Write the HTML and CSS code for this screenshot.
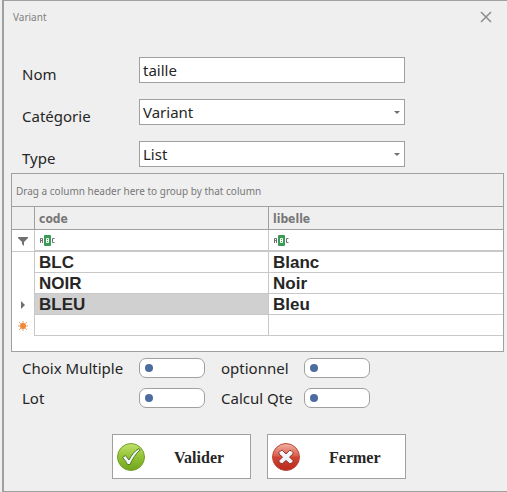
FILE: index.html
```html
<!DOCTYPE html>
<html lang="fr">
<head>
<meta charset="utf-8">
<title>Variant</title>
<link rel="stylesheet" href="styles.css">
</head>
<body>
<main class="window">
  <header class="titlebar">
    <h1 class="title">Variant</h1>
    <button class="close" type="button" aria-label="Close">
      <svg width="12" height="12" viewBox="0 0 12 12"><path d="M1 1l10 10M11 1L1 11" stroke="#8b8b8b" stroke-width="1.5" fill="none"/></svg>
    </button>
  </header>

  <form class="fields">
    <label class="label" for="nom">Nom</label>
    <input class="box" id="nom" type="text" value="taille">
    <label class="label" for="categorie">Catégorie</label>
    <div class="combo">
      <select class="box" id="categorie"><option>Variant</option></select>
      <svg class="arrow" width="6" height="3" viewBox="0 0 6 3"><path d="M0 0h6L3 3z" fill="#707070"/></svg>
    </div>
    <label class="label" for="type">Type</label>
    <div class="combo">
      <select class="box" id="type"><option>List</option></select>
      <svg class="arrow" width="6" height="3" viewBox="0 0 6 3"><path d="M0 0h6L3 3z" fill="#707070"/></svg>
    </div>
  </form>

  <section class="grid">
    <div class="group-panel">Drag a column header here to group by that column</div>
    <table class="table">
      <thead>
        <tr><th class="mark"></th><th class="code">code</th><th>libelle</th></tr>
      </thead>
      <tbody>
        <tr class="filter">
          <td class="mark"><svg width="10" height="10" viewBox="0 0 10 10"><path d="M0 1h10v1L6 6v4L4 8V6L0 2z" fill="#707070"/></svg></td>
          <td><svg class="abc" width="16" height="11" viewBox="0 0 16 11"><rect x="5" width="7" height="11" rx="1" fill="#3a9b57"/><g fill="none" stroke="#707070"><path d="M1.500 8V3.500H3.500V8M1.500 5.500H3.500"/><path d="M15.500 3.500H13.500V7.500H15.500"/></g><path d="M7.500 3.500H9.500V7.500H7.500zM7.500 5.500H9.500" fill="none" stroke="#fff"/></svg></td>
          <td><svg class="abc" width="16" height="11" viewBox="0 0 16 11"><rect x="5" width="7" height="11" rx="1" fill="#3a9b57"/><g fill="none" stroke="#707070"><path d="M1.500 8V3.500H3.500V8M1.500 5.500H3.500"/><path d="M15.500 3.500H13.500V7.500H15.500"/></g><path d="M7.500 3.500H9.500V7.500H7.500zM7.500 5.500H9.500" fill="none" stroke="#fff"/></svg></td>
        </tr>
        <tr><td class="mark"></td><td>BLC</td><td>Blanc</td></tr>
        <tr><td class="mark"></td><td>NOIR</td><td>Noir</td></tr>
        <tr>
          <td class="mark"><svg width="4" height="8" viewBox="0 0 4 8"><path d="M0 0l4 4-4 4z" fill="#707070"/></svg></td>
          <td class="selected">BLEU</td><td>Bleu</td>
        </tr>
        <tr>
          <td class="mark"><svg width="10" height="10" viewBox="0 0 10 10"><path d="M5 0v10M0 5h10M1 1l8 8M9 1L1 9" stroke="#f0a86c"/><circle cx="5" cy="5" r="3" fill="#f0883a"/></svg></td>
          <td></td><td></td>
        </tr>
      </tbody>
    </table>
  </section>

  <section class="options">
    <label for="multiple">Choix Multiple</label><input class="switch" id="multiple" type="checkbox">
    <label for="optionnel">optionnel</label><input class="switch" id="optionnel" type="checkbox">
    <label for="lot">Lot</label><input class="switch" id="lot" type="checkbox">
    <label for="calcul">Calcul Qte</label><input class="switch" id="calcul" type="checkbox">
  </section>

  <footer class="actions">
    <button class="action" type="button">
      <svg width="30" height="30" viewBox="0 0 30 30">
        <defs><linearGradient id="green" x2="0" y2="1"><stop offset="0" stop-color="#c2e16e"/><stop offset=".5" stop-color="#93c136"/><stop offset="1" stop-color="#6fa51c"/></linearGradient></defs>
        <circle cx="15" cy="15" r="13.500" fill="url(#green)" stroke="#74a22c"/>
        <path d="M6.500 15.500l3-2 3.500 4.500C15.500 13 18.500 9 23 6.500l1 1.500c-4.500 4-7.500 9-10 14.500h-2.500C10 19.500 8.500 17.500 6.500 15.500z" fill="#f1f5fa" stroke="#4f7d20"/>
      </svg>
      <span>Valider</span>
    </button>
    <button class="action" type="button">
      <svg width="30" height="30" viewBox="0 0 30 30">
        <defs><linearGradient id="red" x2="0" y2="1"><stop offset="0" stop-color="#f0b3a5"/><stop offset=".45" stop-color="#d9614d"/><stop offset=".5" stop-color="#cf4734"/><stop offset="1" stop-color="#b9281c"/></linearGradient></defs>
        <circle cx="15" cy="15" r="13.500" fill="url(#red)" stroke="#bd4a3c"/>
        <path d="M11.500 8.500L15 12l3.500-3.500h1.500l2 2V12l-3.500 3 3.500 3.500V20l-2 1.500h-1.500L15 18.500l-3.500 3H10L8 20v-1.500l3.500-3.500L8 12v-1.500l2-2z" fill="#f1f5fb" stroke="#963227"/>
      </svg>
      <span>Fermer</span>
    </button>
  </footer>
</main>
</body>
</html>
```

FILE: styles.css
```css
* {
  box-sizing: border-box;
}

body {
  margin: 0;
  background: #efefef;
  color: #262626;
  font: 15px/20px "Noto Sans", sans-serif;
}

.window {
  min-height: 100vh;
  margin-left: 2px;
  border: 1px solid #a0a0a0;
  border-width: 1px 0 1px 2px;
}

.titlebar {
  display: flex;
  align-items: center;
  justify-content: space-between;
  height: 32px;
  padding: 0 12px 0 9px;
}

.title {
  margin: 0;
  color: #808080;
  font-size: 10px;
  font-weight: 400;
}

.close {
  display: flex;
  padding: 3px;
  border: 0;
  background: none;
}

.fields {
  display: grid;
  grid-template-columns: 117px minmax(0, 266px);
  grid-auto-rows: 26px;
  row-gap: 16px;
  padding: 24px 18px 0;
}

.label {
  padding-top: 7px;
}

.combo {
  position: relative;
}

.box {
  display: block;
  width: 100%;
  height: 26px;
  padding: 0 3px;
  border: 1px solid #a0a0a0;
  border-radius: 0;
  appearance: none;
  background: #fff;
  color: inherit;
  font: inherit;
}

.arrow {
  position: absolute;
  right: 5px;
  top: 12px;
}

.grid {
  margin: 6px 3px 0 7px;
  padding-bottom: 15px;
  border: 1px solid #a0a0a0;
  background: #fff;
}

.group-panel {
  height: 33px;
  padding: 0 4px;
  border-bottom: 1px solid #a0a0a0;
  background: #efefef;
  color: #777;
  font-size: 10px;
  line-height: 34px;
}

.table {
  width: 100%;
  border-spacing: 0;
  table-layout: fixed;
}

.table th,
.table td {
  height: 21px;
  padding: 2px 4px 0;
  border: 0 solid #c8c8c8;
  border-bottom-width: 1px;
  font: bold 17px/18px "Liberation Sans", sans-serif;
  text-align: left;
}

.table th:not(:last-child),
.table td:not(:last-child) {
  border-right-width: 1px;
}

.table th {
  height: 23px;
  border-color: #a0a0a0;
  background: #efefef;
  color: #777;
  font: bold 12px/20px "DejaVu Sans Condensed", "DejaVu Sans", sans-serif;
}

.table .code {
  width: 234px;
}

.table .mark {
  width: 23px;
  padding: 0;
  text-align: center;
}

.table td.mark {
  border-bottom-width: 0;
}

.table .filter td {
  height: 22px;
  padding-top: 0;
  border-bottom-width: 2px;
}

.table .filter .mark {
  border-bottom-width: 1px;
}

.mark svg,
.abc {
  display: block;
}

.mark svg {
  margin: 0 auto;
}

.table .selected {
  background: #d0d0d0;
}

.options {
  display: grid;
  grid-template-columns: 117px 66px 99px 66px;
  row-gap: 10px;
  padding: 6px 18px 0;
}

.options label:nth-of-type(even) {
  margin-left: 16px;
  white-space: nowrap;
}

.switch {
  display: flex;
  align-items: center;
  width: 66px;
  height: 20px;
  margin: 0;
  padding: 0 5px;
  border: 1px solid #a0a0a0;
  border-radius: 7px;
  appearance: none;
  background: #fff;
}

.switch::before {
  content: "";
  width: 8px;
  height: 8px;
  border-radius: 50%;
  background: #4c6ca0;
}

.switch:checked {
  justify-content: flex-end;
}

.actions {
  display: flex;
  gap: 16px;
  padding: 26px 0 12px 108px;
}

.action {
  display: flex;
  align-items: center;
  width: 139px;
  height: 45px;
  padding: 0 3px;
  border: 1px solid #a0a0a0;
  background: #fff;
  color: #262626;
  font: bold 16px/20px "Liberation Serif", serif;
  text-align: left;
}

.action span {
  flex: 1;
  padding-top: 2px;
  padding-left: 28px;
}
```
